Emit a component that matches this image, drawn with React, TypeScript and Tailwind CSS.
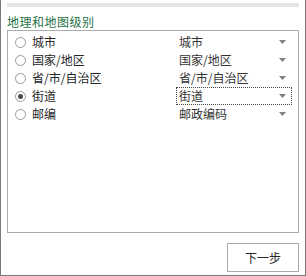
import React from "react";

const rows = [
  { label: "城市", value: "城市", checked: false },
  { label: "国家/地区", value: "国家/地区", checked: false },
  { label: "省/市/自治区", value: "省/市/自治区", checked: false },
  { label: "街道", value: "街道", checked: true },
  { label: "邮编", value: "邮政编码", checked: false },
];

function Radio({ checked }: { checked: boolean }) {
  return (
    <span className="w-[11px] h-[11px] rounded-full border border-[#9a9a9a] bg-white flex items-center justify-center shrink-0">
      {checked && <span className="w-[5px] h-[5px] rounded-full bg-[#4a4a4a]" />}
    </span>
  );
}

function Arrow() {
  return (
    <svg width="7" height="4" viewBox="0 0 7 4" className="shrink-0">
      <polygon points="0,0 7,0 3.5,4" fill="#7f7f7f" />
    </svg>
  );
}

export default function App() {
  return (
    <div
      className="w-[306px] h-[276px] bg-white border-x border-b border-[#7a7a7a] flex flex-col text-[12px] text-[#262626]"
      style={{ fontFamily: '"Noto Sans CJK SC", "Noto Sans", sans-serif' }}
    >
      <div className="mt-[3px] mx-[6px] h-[4px] bg-[#e6e6e6]" />
      <div className="mt-[7px] mx-[6px] leading-[16px] text-[#1e7145] tracking-[0.5px]">地理和地图级别</div>
      <div className="mx-[6px] h-[203px] border border-[#ababab] pt-[2px] flex flex-col">
        {rows.map((r) => (
          <div key={r.label} className="h-[18px] flex items-center">
            <div className="w-[168px] pl-[7px] flex items-center gap-[6px]">
              <Radio checked={r.checked} />
              <span className="leading-[18px]">{r.label}</span>
            </div>
            <div
              className={
                "w-[116px] h-[18px] flex items-center justify-between pl-[2px] pr-[5px] " +
                (r.checked ? "border border-dotted border-[#444]" : "border border-transparent")
              }
            >
              <span className="leading-[16px] text-[#333]">{r.value}</span>
              <Arrow />
            </div>
          </div>
        ))}
      </div>
      <div className="flex justify-end mt-[10px] mr-[6px]">
        <button className="w-[72px] h-[29px] border border-[#ababab] bg-white text-[12px] text-[#262626] flex items-center justify-center">
          下一步
        </button>
      </div>
    </div>
  );
}
